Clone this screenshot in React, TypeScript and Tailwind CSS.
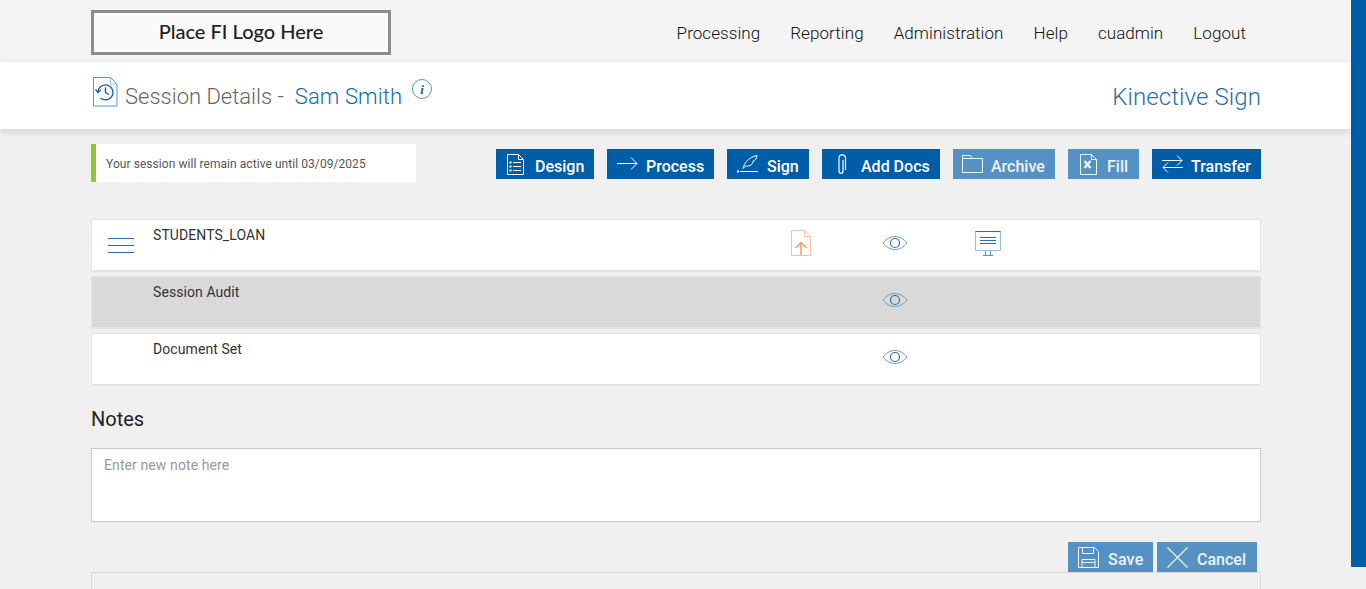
import React from 'react';

const DesignIcon = () => (
  <svg width="17" height="21" viewBox="0 0 17 21" fill="none" stroke="currentColor" strokeWidth="1">
    <path d="M.5.5h11l5 5v15H.5z" />
    <path d="M11.5.5v5h5" />
    <path d="M6 8.5h8M6 12.5h8M6 16.5h8" />
    <path d="M2.5 8.5h2M2.5 12.5h2M2.5 16.5h2" strokeWidth="2" />
  </svg>
);

const ArrowIcon = () => (
  <svg width="21" height="14" viewBox="0 0 21 14" fill="none" stroke="currentColor" strokeWidth="1">
    <path d="M0 6.5h20M14 .5l6 6-6 6" />
  </svg>
);

const SignIcon = () => (
  <svg width="21" height="18" viewBox="0 0 21 18" fill="none" stroke="currentColor" strokeWidth="1">
    <path d="M0 16.5h2" strokeWidth="2" />
    <path d="M3 16.5h18" />
    <path d="M6 13.500C7 8 12 2 20 .5c0 3-2 5-4 5.500 .5 1.500-1 3.500-3 4.500-2 .8-3.500.5-4.500.5-1 .8-1.800 1.500-2.500 2.500z" />
  </svg>
);

const ClipIcon = () => (
  <svg width="10" height="21" viewBox="0 0 10 21" fill="none" stroke="currentColor" strokeWidth="1.200">
    <path d="M6 6v11c0 1.300-.6 2.300-1.700 2.300S2 18.300 2 17V4.200C2 2 3.300.8 5 .8S8.500 2 8.500 4.200V16" />
  </svg>
);

const FolderIcon = () => (
  <svg width="21" height="18" viewBox="0 0 21 18" fill="none" stroke="currentColor" strokeWidth="1">
    <path d="M.5 17.500V.5h8l2 3h10v14z" />
    <path d="M.5 3.500h10" />
  </svg>
);

const FillIcon = () => (
  <svg width="17" height="21" viewBox="0 0 17 21" fill="none" stroke="currentColor" strokeWidth="1">
    <path d="M.5.5h11l5 5v15H.5z" />
    <path d="M11.500.5v5h5" />
    <path d="M4.500 7l6 7M10.500 7l-6 7" strokeWidth="2.400" />
  </svg>
);

const TransferIcon = () => (
  <svg width="21" height="18" viewBox="0 0 21 18" fill="none" stroke="currentColor" strokeWidth="1">
    <path d="M0 5.500h20M15 .5l5 5-5 5" />
    <path d="M21 12.500H1M6 7.500l-5 5 5 5" />
  </svg>
);

const SaveIcon = () => (
  <svg width="21" height="21" viewBox="0 0 21 21" fill="none" stroke="currentColor" strokeWidth="1">
    <path d="M.5.5h16l4 4v16H.5z" />
    <path d="M4.500.5v6h11v-6" />
    <path d="M4 20.500v-8h13v8" />
    <path d="M4 15.500h13" />
  </svg>
);

const CancelIcon = () => (
  <svg width="21" height="21" viewBox="0 0 21 21" fill="none" stroke="currentColor" strokeWidth="1.200">
    <path d="M.5.5l20 20M20.500.5l-20 20" />
  </svg>
);

const EyeIcon = () => (
  <svg width="26" height="16" viewBox="0 0 26 16" fill="none" className="text-[#2f6ea8]">
    <path d="M1 8c3-4 7.500-6.500 12-6.500S22 4 25 8c-3 4-7.500 6.500-12 6.500S4 12 1 8z" stroke="#6a9cc4" strokeWidth="1" />
    <circle cx="13" cy="8" r="4.500" stroke="currentColor" strokeWidth="1.200" />
  </svg>
);

const UploadIcon = () => (
  <svg width="20" height="26" viewBox="0 0 20 26" fill="none">
    <path d="M.5.5h13l6 6v19H.5z" stroke="#fbbfa8" strokeWidth="1" />
    <path d="M13.500.5v6h6" stroke="#fbbfa8" strokeWidth="1" />
    <path d="M10 25V13M4.500 18l5.500-5.500 5.500 5.500" stroke="#f59a52" strokeWidth="1.400" />
  </svg>
);

const ScreenIcon = () => (
  <svg width="26" height="25" viewBox="0 0 26 25" fill="none">
    <path d="M.5 19.500V.5h25v19z" stroke="#8cc4e8" strokeWidth="1" />
    <path d="M.5.5h25" stroke="#2f6ea8" strokeWidth="1" />
    <path d="M5 6.500h16M5 9.500h16M5 12.500h16" stroke="#2f6ea8" strokeWidth="1" />
    <path d="M10.500 20v4M15.500 20v4M8 24.500h10" stroke="#5a93c2" strokeWidth="1" />
  </svg>
);

const HistoryDocIcon = () => (
  <svg width="25" height="30" viewBox="0 0 25 30" fill="none">
    <path d="M.5.5h17l6.500 6.500v22H.500z" stroke="#4a9bd0" strokeWidth="1" />
    <path d="M17.500.5v6.500H24" stroke="#8cc4e8" strokeWidth="1" />
    <path d="M5 15a7.500 7.500 0 1 1 2.500 6" stroke="#1f5f95" strokeWidth="1.400" />
    <path d="M2.500 12.500l2.500 3 3-2.500" stroke="#1f5f95" strokeWidth="1.400" />
    <path d="M12.500 10.500v5l3.500 2" stroke="#1f5f95" strokeWidth="1.400" />
  </svg>
);

const actions = [
  { label: 'Design', icon: <DesignIcon />, cls: 'w-[98px] pl-[11px] gap-[11px]', on: true },
  { label: 'Process', icon: <ArrowIcon />, cls: 'w-[107px] pl-[10px] gap-[8px]', on: true },
  { label: 'Sign', icon: <SignIcon />, cls: 'w-[82px] pl-[10px] gap-[9px]', on: true },
  { label: 'Add Docs', icon: <ClipIcon />, cls: 'w-[118px] pl-[15px] gap-[14px]', on: true },
  { label: 'Archive', icon: <FolderIcon />, cls: 'w-[102px] pl-[9px] gap-[8px]', on: false },
  { label: 'Fill', icon: <FillIcon />, cls: 'w-[71px] pl-[12px] gap-[10px]', on: false },
  { label: 'Transfer', icon: <TransferIcon />, cls: 'w-[109px] pl-[10px] gap-[8px]', on: true },
];

const rows = [
  { name: 'STUDENTS_LOAN', menu: true, upload: true, screen: true, bg: 'bg-white' },
  { name: 'Session Audit', menu: false, upload: false, screen: false, bg: 'bg-[#d9d9d9]' },
  { name: 'Document Set', menu: false, upload: false, screen: false, bg: 'bg-white' },
];

const nav = ['Processing', 'Reporting', 'Administration', 'Help', 'cuadmin', 'Logout'];

export default function App() {
  return (
    <div className="flex h-[589px] overflow-hidden bg-[#f0f0f0] font-['Roboto',sans-serif] text-[#333]">
      <div className="w-[1351px] shrink-0">
        <header className="h-[62px] bg-[#f4f4f4]">
          <div className="ml-[91px] flex w-[1170px] items-start justify-between pt-[10px]">
            <div className="flex h-[45px] w-[300px] items-center justify-center border-[3px] border-[#8c8c8c] bg-[#fafafa] pb-[4px] font-['Lato',sans-serif] text-[20px] font-medium text-[#222]">
              Place FI Logo Here
            </div>
            <nav className="flex gap-[30px] pr-[15px] pt-[13px] text-[17px] font-light leading-[20px] tracking-[0.07px] text-[#111]">
              {nav.map((n) => (
                <span key={n}>{n}</span>
              ))}
            </nav>
          </div>
        </header>

        <div className="relative flex h-[67px] bg-white shadow-[0_2px_8px_rgba(0,0,0,0.14)]">
          <div className="ml-[91px] flex w-[1170px] items-start justify-between">
            <div className="flex items-start pl-[2px] pt-[15px]">
              <HistoryDocIcon />
              <span className="ml-[7px] mt-[5px] text-[22px] font-light leading-[30px] text-[#666]">Session Details -</span>
              <span className="ml-[11px] mt-[5px] text-[22px] font-light leading-[30px] tracking-[0.1px] text-[#0f6cb0]">Sam Smith</span>
              <span className="ml-[10px] mt-[2px] flex h-[20px] w-[20px] items-center justify-center rounded-full border border-[#5a93c2] font-['Liberation_Serif',serif] text-[13px] font-bold italic leading-none text-[#1f5f95]">
                i
              </span>
            </div>
            <span className="pt-[20px] text-[24px] font-light leading-[30px] tracking-[0.1px] text-[#2a6db0]">Kinective Sign</span>
          </div>
        </div>

        <div className="ml-[91px] w-[1170px]">
          <div className="flex items-start justify-between pt-[15px]">
            <div className="flex h-[38px] w-[325px] items-center border-l-[5px] border-[#8cc63f] bg-white pl-[10px] pt-[2px] text-[12px] tracking-[0.06px] text-[#555]">
              Your session will remain active until 03/09/2025
            </div>
            <div className="mt-[5px] flex gap-[13px]">
              {actions.map((a) => (
                <button
                  key={a.label}
                  className={`flex h-[30px] items-center text-[16px] font-medium ${a.cls} ${a.on ? 'bg-[#005ea8] text-white' : 'bg-[#5591c3] text-[#eef4f9]'}`}
                >
                  {a.icon}
                  <span className="mt-[6px]">{a.label}</span>
                </button>
              ))}
            </div>
          </div>

          <div className="mt-[37px] flex flex-col gap-[4px]">
            {rows.map((r) => (
              <div
                key={r.name}
                className={`flex h-[53px] items-start border border-b-2 border-[#e3e3e3] ${r.bg}`}
              >
                <div className="w-[61px] shrink-0 pl-[16px] pt-[18px]">
                  {r.menu && (
                    <div className="flex w-[26px] flex-col gap-[6px]">
                      <span className="h-[1px] bg-[#2f6ea8]" />
                      <span className="h-[1px] bg-[#2f6ea8]" />
                      <span className="h-[1px] bg-[#2f6ea8]" />
                    </div>
                  )}
                </div>
                <span className="w-[638px] shrink-0 pt-[7px] text-[14px] leading-[16px] tracking-[0.08px] text-[#333]">{r.name}</span>
                <div className="w-[91px] shrink-0 pt-[10px]">{r.upload && <UploadIcon />}</div>
                <div className="w-[93px] shrink-0 pt-[15px]">
                  <EyeIcon />
                </div>
                <div className="pt-[11px]">{r.screen && <ScreenIcon />}</div>
              </div>
            ))}
          </div>

          <h2 className="mt-[22px] text-[20px] leading-[22px] text-[#222]">Notes</h2>

          <div className="mt-[18px] h-[74px] border border-[#c8c8c8] bg-white px-[12px] py-[8px] text-[14px] leading-[17px] tracking-[0.1px] text-[#999]">
            Enter new note here
          </div>

          <div className="mt-[20px] flex justify-end gap-[4px] pr-[4px]">
            <button className="flex h-[30px] w-[85px] items-center gap-[9px] bg-[#5591c3] pl-[10px] text-[16px] font-medium tracking-[0.2px] text-[#eef4f9]">
              <SaveIcon />
              <span className="mt-[6px]">Save</span>
            </button>
            <button className="flex h-[30px] w-[100px] items-center gap-[9px] bg-[#5591c3] pl-[10px] text-[16px] font-medium text-[#eef4f9]">
              <CancelIcon />
              <span className="mt-[6px]">Cancel</span>
            </button>
          </div>

          <div className="h-[40px] border border-[#d8d8d8]" />
        </div>
      </div>
      <div className="h-[567px] w-[15px] bg-[#005ea8]" />
    </div>
  );
}
